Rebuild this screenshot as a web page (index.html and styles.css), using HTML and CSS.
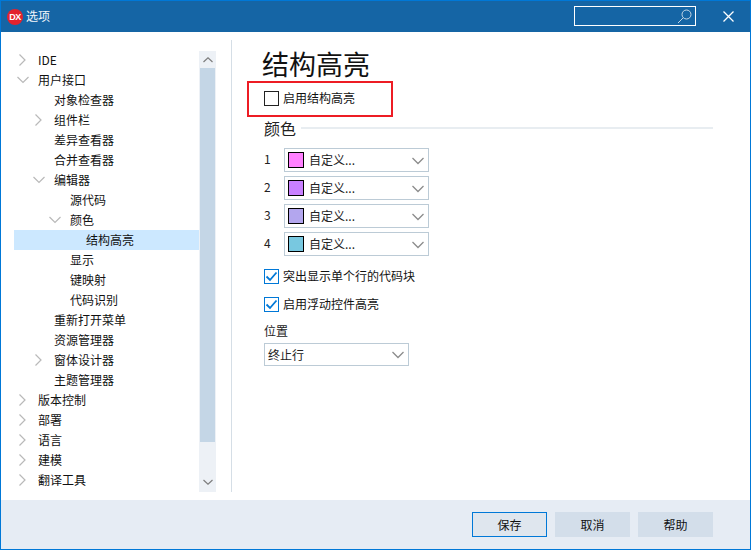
FILE: index.html
```html
<!DOCTYPE html>
<html lang="zh">
<head>
<meta charset="utf-8">
<title>选项</title>
<link rel="stylesheet" href="styles.css">
</head>
<body>
<svg class="defs" width="0" height="0">
  <symbol id="closed" viewBox="0 0 12 12"><path d="M2.5 .5 8 6 2.500 11.500" fill="none" stroke="#b9b9b9" stroke-width="1.200"/></symbol>
  <symbol id="open" viewBox="0 0 12 12"><path d="M.5 3 6 8.500 11.500 3" fill="none" stroke="#b9b9b9" stroke-width="1.200"/></symbol>
  <symbol id="drop" viewBox="0 0 12 8"><path d="M.5 1 6 6.500 11.500 1" fill="none" stroke="#8c8c8c" stroke-width="1.300"/></symbol>
  <symbol id="tick" viewBox="0 0 15 15"><path d="M2.500 7.500 6 11 12.500 3.500" fill="none" stroke="#0078d7" stroke-width="1.800"/></symbol>
</svg>
<div class="window">
  <header class="titlebar">
    <span class="logo">DX</span>
    <span class="title">选项</span>
    <div class="search">
      <svg width="16" height="16" viewBox="0 0 16 16"><circle cx="9.500" cy="6.500" r="4.500" fill="none" stroke="#c4d6e6" stroke-width="1"/><path d="M6.200 9.800 1 15" stroke="#c4d6e6" stroke-width="1" fill="none"/></svg>
    </div>
    <svg class="close" width="11" height="11" viewBox="0 0 11 11"><path d="M.5 .5 10.500 10.500M10.500 .5 .5 10.500" stroke="#fff" stroke-width="1.300" fill="none"/></svg>
  </header>
  <main class="body">
    <nav class="tree">
      <ul class="rows">
        <li class="row l0"><svg class="chev"><use href="#closed"/></svg>IDE</li>
        <li class="row l0"><svg class="chev"><use href="#open"/></svg>用户接口</li>
        <li class="row l1">对象检查器</li>
        <li class="row l1"><svg class="chev"><use href="#closed"/></svg>组件栏</li>
        <li class="row l1">差异查看器</li>
        <li class="row l1">合并查看器</li>
        <li class="row l1"><svg class="chev"><use href="#open"/></svg>编辑器</li>
        <li class="row l2">源代码</li>
        <li class="row l2"><svg class="chev"><use href="#open"/></svg>颜色</li>
        <li class="row l3 selected">结构高亮</li>
        <li class="row l2">显示</li>
        <li class="row l2">键映射</li>
        <li class="row l2">代码识别</li>
        <li class="row l1">重新打开菜单</li>
        <li class="row l1">资源管理器</li>
        <li class="row l1"><svg class="chev"><use href="#closed"/></svg>窗体设计器</li>
        <li class="row l1">主题管理器</li>
        <li class="row l0"><svg class="chev"><use href="#closed"/></svg>版本控制</li>
        <li class="row l0"><svg class="chev"><use href="#closed"/></svg>部署</li>
        <li class="row l0"><svg class="chev"><use href="#closed"/></svg>语言</li>
        <li class="row l0"><svg class="chev"><use href="#closed"/></svg>建模</li>
        <li class="row l0"><svg class="chev"><use href="#closed"/></svg>翻译工具</li>
      </ul>
      <div class="scrollbar">
        <svg class="arrow" width="10" height="6" viewBox="0 0 10 6"><path d="M.5 5 5 .8 9.500 5" fill="none" stroke="#7d7d7d" stroke-width="1.200"/></svg>
        <div class="thumb"></div>
        <svg class="arrow" width="10" height="6" viewBox="0 0 10 6"><path d="M.5 1 5 5.200 9.500 1" fill="none" stroke="#7d7d7d" stroke-width="1.200"/></svg>
      </div>
    </nav>
    <section class="pane">
      <h1 class="heading">结构高亮</h1>
      <label class="check enable"><span class="box"></span>启用结构高亮</label>
      <div class="highlight"></div>
      <h2 class="group">颜色</h2>
      <div class="colors">
        <div class="color-row"><span class="num">1</span><div class="combo wide"><i class="swatch s1"></i><span class="val">自定义...</span><svg class="caret"><use href="#drop"/></svg></div></div>
        <div class="color-row"><span class="num">2</span><div class="combo wide"><i class="swatch s2"></i><span class="val">自定义...</span><svg class="caret"><use href="#drop"/></svg></div></div>
        <div class="color-row"><span class="num">3</span><div class="combo wide"><i class="swatch s3"></i><span class="val">自定义...</span><svg class="caret"><use href="#drop"/></svg></div></div>
        <div class="color-row"><span class="num">4</span><div class="combo wide"><i class="swatch s4"></i><span class="val">自定义...</span><svg class="caret"><use href="#drop"/></svg></div></div>
      </div>
      <label class="check first"><span class="box on"><svg width="15" height="15"><use href="#tick"/></svg></span>突出显示单个行的代码块</label>
      <label class="check second"><span class="box on"><svg width="15" height="15"><use href="#tick"/></svg></span>启用浮动控件高亮</label>
      <div class="pos-label">位置</div>
      <div class="combo pos"><span class="val">终止行</span><svg class="caret"><use href="#drop"/></svg></div>
    </section>
  </main>
  <footer class="footer">
    <button class="btn primary">保存</button>
    <button class="btn">取消</button>
    <button class="btn">帮助</button>
  </footer>
</div>
</body>
</html>
```
FILE: styles.css
```css
* { box-sizing: border-box; }
html, body { margin: 0; padding: 0; }
body {
  width: 751px; height: 550px; overflow: hidden;
  font-family: "Noto Sans CJK SC", "Noto Sans", sans-serif;
  font-size: 12px; color: #111;
}
.defs { position: absolute; }
.window {
  width: 751px; height: 550px;
  border: 1px solid #0078d7;
  display: flex; flex-direction: column;
  background: #fff;
}
.titlebar {
  height: 31px; flex: none;
  background: #1565a5;
  display: flex; align-items: center;
  padding: 0 16px 0 6px;
  color: #fff;
}
.logo {
  width: 16px; height: 16px; border-radius: 50%;
  background: #e3232e; color: #fff;
  font: bold 9px/16px "Liberation Sans", sans-serif;
  text-align: center; letter-spacing: -.4px;
  margin-right: 3px;
}
.title { font-size: 12px; line-height: 16px; color: #f2f6fa; margin-top: -2px; }
.search {
  margin-left: auto;
  width: 122px; height: 20px;
  border: 1px solid #fff;
  display: flex; justify-content: flex-end; align-items: center;
  padding-right: 2px;
  margin-top: -1px;
}
.close { margin-left: 27px; }
.body { flex: 1; display: flex; min-height: 0; }
.tree {
  width: 216px; flex: none;
  padding: 18px 0 0 13px;
  display: flex; align-items: flex-start;
}
.rows { list-style: none; margin: 0; padding: 0; width: 185px; }
.row {
  height: 20px; line-height: 20px;
  position: relative; white-space: nowrap;
}
.l0 { padding-left: 24px; }
.l1 { padding-left: 40px; }
.l2 { padding-left: 56px; }
.l3 { padding-left: 72px; }
.selected { background: #cce8ff; }
.chev {
  position: absolute; top: 4px; width: 12px; height: 12px;
}
.l0 .chev { left: 3px; }
.l1 .chev { left: 19px; }
.l2 .chev { left: 35px; }
.scrollbar {
  width: 17px; height: 441px; margin-top: 1px;
  background: #edf1f6;
  display: flex; flex-direction: column; align-items: center;
}
.scrollbar .arrow { flex: none; margin: 6px 0 5px; }
.thumb { width: 15px; height: 374px; background: #c4d6e6; flex: none; }
.scrollbar .arrow:last-child { margin: 37px 0 0; }
.pane {
  position: relative;
  margin: 8px 0 8px 14px;
  border-left: 1px solid #d5dee6;
  width: 482px;
  padding-left: 31px;
}
.heading {
  margin: 0 0 0 -1px; font-weight: 400; font-size: 27px; line-height: 36px;
  padding-top: 6px; height: 42px; color: #111;
}
.check { display: flex; align-items: center; gap: 4px; line-height: 16px; padding-left: 1px; white-space: nowrap; }
.enable { margin-top: 8px; }
.box {
  width: 15px; height: 15px; flex: none; border: 1px solid #222;
  display: block; position: relative; background: #fff;
}
.box.on { border-color: #0078d7; }
.box.on svg { position: absolute; left: -1px; top: -1px; }
.highlight {
  position: absolute; left: 15px; top: 41px;
  width: 146px; height: 36px;
  border: 2px solid #ed1c24;
  pointer-events: none;
}
.group {
  margin: 11px 0 0; font-weight: 400; font-size: 16px; line-height: 22px;
  padding-left: 1px; display: flex; align-items: center; gap: 5px; color: #222;
}
.group::after { content: ""; flex: 1; height: 2px; background: #e8edf1; }
.colors { margin-top: 9px; display: flex; flex-direction: column; gap: 4px; }
.color-row { display: flex; align-items: center; padding-left: 1px; }
.num { width: 20px; font-size: 12px; color: #222; line-height: 20px; margin-top: -2px; }
.combo {
  height: 24px; border: 1px solid #bccbd6; background: #fff;
  display: flex; align-items: center; position: relative;
}
.wide { width: 145px; padding-left: 3px; }
.swatch { width: 16px; height: 16px; border: 1px solid #000; flex: none; margin-right: 5px; }
.s1 { background: #ff80ff; }
.s2 { background: #c880ff; }
.s3 { background: #b3a6ee; }
.s4 { background: #78c8e0; }
.val { line-height: 16px; color: #222; }
.caret { position: absolute; right: 4px; top: 8px; width: 12px; height: 8px; }
.first { margin-top: 12px; }
.second { margin-top: 12px; }
.pos-label { margin-top: 11px; padding-left: 1px; line-height: 16px; color: #222; }
.pos { margin: 4px 0 0 1px; width: 145px; height: 23px; padding-left: 3px; }
.pos .caret { top: 7px; }
.footer {
  height: 49px; flex: none;
  background: #e6ecf4;
  display: flex; justify-content: flex-end; gap: 8px;
  padding: 12px 37px 0 0;
}
.btn {
  width: 75px; height: 25px; padding: 0;
  border: 0; background: #d3deea;
  font: inherit; color: #111;
}
.primary { border: 1px solid #0078d7; background: #dfe6ee; }
```
